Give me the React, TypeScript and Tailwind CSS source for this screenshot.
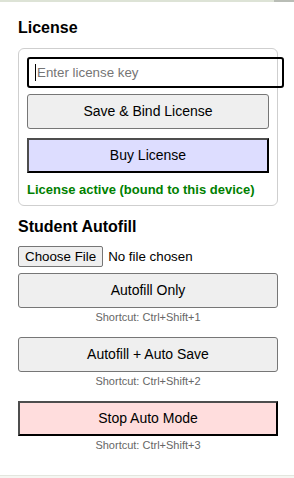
export default function App() {
  const shortcut = "text-center text-[11px] leading-[13px] text-[#666] mt-[3px] mb-[13px]";
  const grayBtn =
    "block w-full h-[35px] bg-[#efefef] border border-[#767676] rounded-[3px] text-[14px] text-black";
  const outsetBtn =
    "block w-full h-[35px] border-2 border-t-[#4d4d4d] border-l-[#4d4d4d] border-b-black border-r-black text-[14px] text-black";

  return (
    <div
      className="w-full h-[478px] flex flex-col bg-white overflow-hidden"
      style={{ fontFamily: '"Liberation Sans", Arial, sans-serif' }}
    >
      <div className="h-[2px] flex shrink-0">
        <div className="flex-1 bg-[#dde3d6]" />
        <div className="w-[20px] bg-[#b9bdb6]" />
      </div>

      <div className="flex-1 pl-[18px] pr-[16px] pt-[17px]">
        <h2 className="text-[16px] leading-[18px] font-bold text-black">License</h2>

        <div className="mt-[11px] w-[260px] border border-[#cfcfcf] rounded-[6px] p-[8px]">
          <div className="w-[257px] h-[31px] border-2 border-black rounded-[3px] flex items-center pl-[6px]">
            <span className="w-[1px] h-[17px] bg-black" />
            <span className="ml-[1px] text-[13.33px] text-[#757575]">Enter license key</span>
          </div>
          <button className={grayBtn + " mt-[6px]"}>Save &amp; Bind License</button>
          <button className={outsetBtn + " mt-[9px] bg-[#ddddff]"}>Buy License</button>
          <p className="mt-[9px] text-[13px] leading-[15px] font-bold text-[#008000]">
            License active (bound to this device)
          </p>
        </div>

        <h2 className="mt-[12px] text-[16px] leading-[18px] font-bold text-black">Student Autofill</h2>

        <div className="mt-[10px] flex items-center h-[21px]">
          <span className="h-[21px] px-[6px] flex items-center bg-[#efefef] border border-[#767676] rounded-[2px] text-[13.33px] text-black">
            Choose File
          </span>
          <span className="ml-[5px] text-[13.33px] text-black">No file chosen</span>
        </div>

        <div className="w-[260px]">
          <button className={grayBtn + " mt-[6px]"}>Autofill Only</button>
          <p className={shortcut}>Shortcut: Ctrl+Shift+1</p>
          <button className={grayBtn}>Autofill + Auto Save</button>
          <p className={shortcut}>Shortcut: Ctrl+Shift+2</p>
          <button className={outsetBtn + " bg-[#ffdddd]"}>Stop Auto Mode</button>
          <p className={shortcut}>Shortcut: Ctrl+Shift+3</p>
        </div>
      </div>

      <div className="h-[1px] bg-[#e3e6de] shrink-0" />
      <div className="h-[2px] bg-[#f5f6f2] shrink-0" />
    </div>
  );
}
